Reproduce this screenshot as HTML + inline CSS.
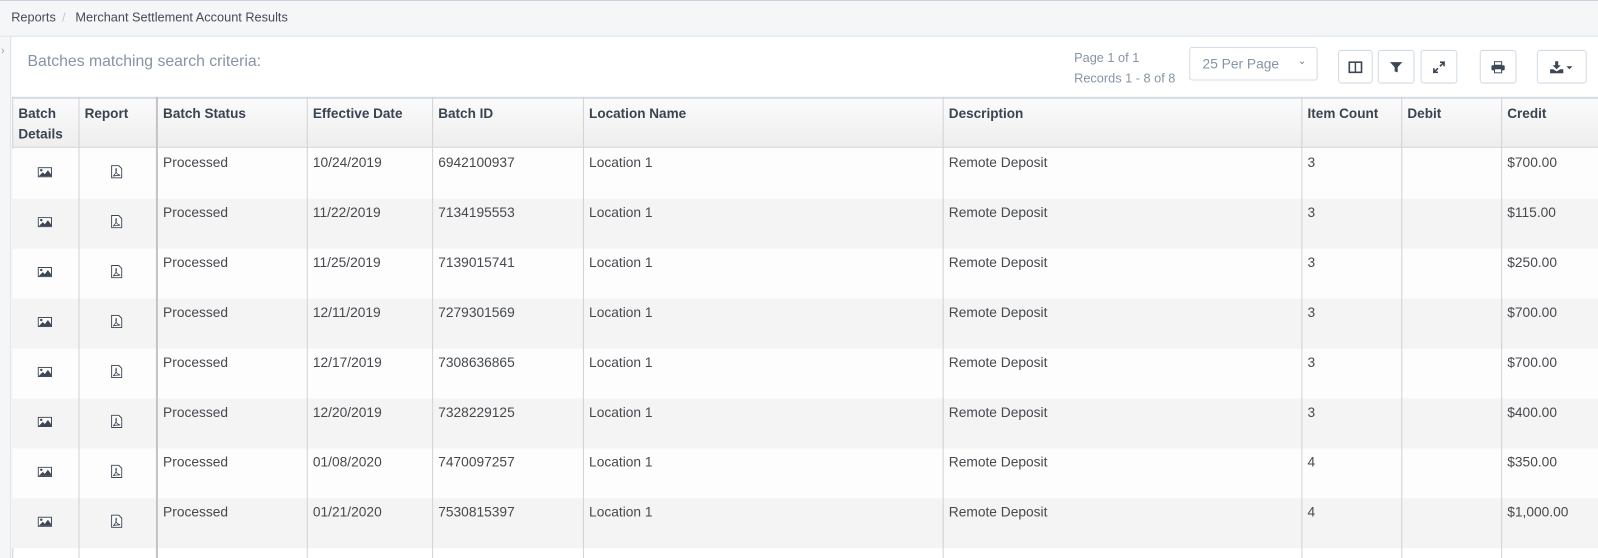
<!DOCTYPE html>
<html><head><meta charset="utf-8"><style>
*{margin:0;padding:0;box-sizing:border-box}
body{width:1598px;height:548px;overflow:hidden;background:#fff;font-family:"Liberation Sans",sans-serif;font-size:13.5px;color:#45494e;position:relative}
#w{position:absolute;left:0;top:0;width:1568px;height:538px;transform:scale(1.0191);transform-origin:0 0}
.a{position:absolute}
.crumb{left:0;top:0;width:1568px;height:36px;background:#f5f6f8;border-top:1px solid #c9d1dc;border-bottom:1px solid #dde3ea}
.side{left:0;top:36px;width:11px;height:512px;background:#f5f6f8;border-right:1px solid #dbe1e8}
.btn{top:49px;height:33px;border:1px solid #d3dae3;border-radius:3px;background:#fff;display:flex;align-items:center;justify-content:center}
.th{top:95px;height:50px;border-top:2px solid #d5dbe3;border-bottom:1px solid #d3d3d3;background:linear-gradient(#fbfbfb,#eeeeee)}
.h{position:absolute;top:102px;font-weight:bold;color:#3a4350;font-size:13.3px;line-height:20px}
.row{position:absolute;left:12px;width:1586px;height:49px}
.t{position:absolute;line-height:16px}
.vl{position:absolute;top:95px;height:453px;width:1px;background:#d2d2d2;z-index:2}
</style></head><body><div id="w">
<div class="a crumb"></div>
<div class="a" style="left:11px;top:10px;font-size:12.5px;color:#454b53">Reports</div>
<div class="a" style="left:61px;top:10px;font-size:12px;color:#c0c6ce">/</div>
<div class="a" style="left:74px;top:10px;font-size:12.5px;color:#454b53">Merchant Settlement Account Results</div>
<div class="a side"></div>
<div class="a" style="left:1px;top:44px;font-size:11px;color:#9aa3ad">&#8250;</div>
<div class="a" style="left:27px;top:52px;font-size:15.5px;color:#8694a5">Batches matching search criteria:</div>
<div class="a" style="left:1054px;top:47px;font-size:12.5px;color:#8694a5;line-height:20px">Page 1 of 1<br>Records 1 - 8 of 8</div>
<div class="a btn" style="left:1167px;top:46px;width:126px;justify-content:flex-start;padding-left:12px;color:#8694a5;font-size:13.5px">25 Per Page<span style="position:absolute;right:10px;top:8px;font-size:10px;color:#6f7a86">&#8964;</span></div>
<div class="a btn" style="left:1313px;width:34px"><svg width="14" height="12"><rect x="1" y="1" width="12" height="10" fill="none" stroke="#3d4654" stroke-width="1.6"/><line x1="7" y1="1" x2="7" y2="11" stroke="#3d4654" stroke-width="1.4"/></svg></div>
<div class="a btn" style="left:1352px;width:36px"><svg width="12" height="12"><path d="M0 1h12L7.5 6v5L4.5 10V6z" fill="#3d4654"/></svg></div>
<div class="a btn" style="left:1394px;width:36px"><svg width="12" height="12"><path d="M7 1h4v4M11 1L7 5M5 11H1V7M1 11l4-4" fill="none" stroke="#3d4654" stroke-width="1.6"/></svg></div>
<div class="a btn" style="left:1452px;width:36px"><svg width="14" height="12"><rect x="3.5" y="0.5" width="7" height="3.5" fill="none" stroke="#3d4654"/><rect x="0.5" y="4" width="13" height="5" rx="1" fill="#3d4654"/><rect x="3.5" y="7.5" width="7" height="4" fill="#fff" stroke="#3d4654"/></svg></div>
<div class="a btn" style="left:1508px;width:49px"><svg width="24" height="12"><path d="M5 0h3v4h2.5L6.5 8 2.5 4H5z" fill="#3d4654"/><path d="M0 8h3l3.5 2L10 8h3v4H0z" fill="#3d4654"/><path d="M16 5h6l-3 3z" fill="#3d4654"/></svg></div>

<div class="a th" style="left:12px;width:1586px"></div>
<div class="a" style="left:12px;top:95px;width:1px;height:453px;background:#d2d2d2"></div>
<div class="vl" style="left:77px"></div>
<div class="vl" style="left:153px;width:2px;background:#c4c4c4"></div>
<div class="vl" style="left:301px"></div>
<div class="vl" style="left:424px"></div>
<div class="vl" style="left:572px"></div>
<div class="vl" style="left:925px"></div>
<div class="vl" style="left:1277px"></div>
<div class="vl" style="left:1375px"></div>
<div class="vl" style="left:1473px"></div>
<div class="h" style="left:18px">Batch<br>Details</div>
<div class="h" style="left:83px">Report</div>
<div class="h" style="left:160px">Batch Status</div>
<div class="h" style="left:307px">Effective Date</div>
<div class="h" style="left:430px">Batch ID</div>
<div class="h" style="left:578px">Location Name</div>
<div class="h" style="left:931px">Description</div>
<div class="h" style="left:1283px">Item Count</div>
<div class="h" style="left:1381px">Debit</div>
<div class="h" style="left:1479px">Credit</div>

<div id="rows"></div>
</div>
<script>
var d=[["10/24/2019","6942100937","3","$700.00"],["11/22/2019","7134195553","3","$115.00"],["11/25/2019","7139015741","3","$250.00"],["12/11/2019","7279301569","3","$700.00"],["12/17/2019","7308636865","3","$700.00"],["12/20/2019","7328229125","3","$400.00"],["01/08/2020","7470097257","4","$350.00"],["01/21/2020","7530815397","4","$1,000.00"]];
var h="";
d.forEach(function(r,i){var y=146+i*49;
h+='<div class="row" style="top:'+y+'px;background:'+(i%2?'#f4f4f4':'#fdfdfd')+'"></div>';
var ty=y+6;
h+='<svg class="a" style="left:37px;top:'+(y+18)+'px" width="14" height="10"><rect x="0.5" y="0.5" width="13" height="9" fill="#fff" stroke="#3d4654"/><circle cx="3.5" cy="3" r="1.2" fill="#3d4654"/><path d="M1 9L5 5l2 2 3-4 3 4v2z" fill="#3d4654"/></svg>';
h+='<svg class="a" style="left:109px;top:'+(y+16)+'px" width="11" height="13"><path d="M0.5 0.5h7l3 3v9h-10z" fill="#fff" stroke="#3d4654"/><path d="M5 3c-1 3 0 6 4 7M5 3c1 3-1 6-3 8M2 11c2-1 5-1 7-1" fill="none" stroke="#3d4654" stroke-width="0.8"/></svg>';
[[160,"Processed"],[307,r[0]],[430,r[1]],[578,"Location 1"],[931,"Remote Deposit"],[1283,r[2]],[1479,r[3]]].forEach(function(c){h+='<div class="t" style="left:'+c[0]+'px;top:'+ty+'px">'+c[1]+'</div>';});
});
document.getElementById('rows').outerHTML=h;
</script>
</body></html>
